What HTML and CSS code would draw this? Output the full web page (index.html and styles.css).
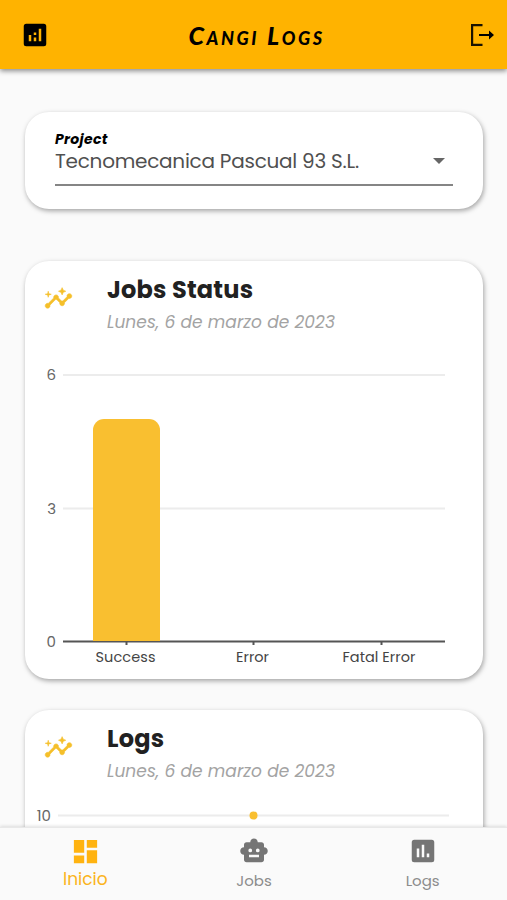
FILE: index.html
```html
<!DOCTYPE html>
<html lang="es">
<head>
    <meta charset="UTF-8">
    <meta name="viewport" content="width=device-width, initial-scale=1.0">
    <title>Cangi Logs</title>
    <link rel="stylesheet" href="styles.css">
</head>
<body>
    <header>
        <svg class="icon" viewBox="0 0 24 24" width="30" height="30"><path fill-rule="evenodd" d="M5 3h14a2 2 0 0 1 2 2v14a2 2 0 0 1-2 2H5a2 2 0 0 1-2-2V5a2 2 0 0 1 2-2zM7 12v5h2v-5zM11 14v3h2v-3zM11 10v2h2v-2zM15 7v10h2V7z"/></svg>
        <h1>Cangi Logs</h1>
        <svg class="icon" viewBox="0 0 26 26" width="26" height="26"><path d="M13.500 3.100H3.100v19.800h10.400" fill="none" stroke="#1a1200" stroke-width="2.200"/><path d="M10 12h10V8.500l5 4.500-5 4.500V14H10z"/></svg>
    </header>
    <main>
        <section class="card project">
            <label>Project</label>
            <div class="select">
                <span>Tecnomecanica Pascual 93 S.L.</span>
                <i class="caret"></i>
            </div>
        </section>
        <section class="card chart-card">
            <div class="card-header">
                <svg class="insights" viewBox="0 0 24 24" width="29" height="29"><path d="M21 8c-1.450 0-2.260 1.440-1.930 2.510l-3.550 3.560c-.3-.09-.74-.09-1.040 0l-2.550-2.550C12.270 10.450 11.460 9 10 9c-1.450 0-2.270 1.440-1.930 2.520l-4.560 4.550C2.440 15.740 1 16.550 1 18c0 1.100.9 2 2 2 1.450 0 2.260-1.440 1.930-2.510l4.550-4.560c.3.090.74.090 1.040 0l2.550 2.550C12.730 16.550 13.540 18 15 18c1.450 0 2.270-1.440 1.930-2.520l3.560-3.550c1.070.33 2.510-.48 2.510-1.930 0-1.100-.9-2-2-2z"/><path d="M15 9l.94-2.070L18 6l-2.060-.93L15 3l-.92 2.070L12 6l2.080.93zM3.500 11L4 9l2-.5L4 8l-.5-2L3 8l-2 .5L3 9z"/></svg>
                <div>
                    <h2>Jobs Status</h2>
                    <p>Lunes, 6 de marzo de 2023</p>
                </div>
            </div>
            <svg class="chart" viewBox="0 0 459 320" width="459" height="320">
                <g class="grid">
                    <path d="M38 15H420M38 148.500H420"/>
                </g>
                <g class="y-labels">
                    <text x="31" y="20">6</text>
                    <text x="31" y="153.500">3</text>
                    <text x="31" y="287">0</text>
                </g>
                <path class="axis" d="M38 281.500H420M101.500 281v4M228.500 281v4M356.500 281v4"/>
                <path class="bar" d="M68 281V70a11 11 0 0 1 11-11h45a11 11 0 0 1 11 11v211z"/>
                <g class="x-labels">
                    <text x="100.500" y="301.500" textLength="60">Success</text>
                    <text x="227.500" y="301.500" textLength="33">Error</text>
                    <text x="354" y="301.500" textLength="73">Fatal Error</text>
                </g>
            </svg>
        </section>
        <section class="card chart-card logs">
            <div class="card-header">
                <svg class="insights" viewBox="0 0 24 24" width="29" height="29"><path d="M21 8c-1.450 0-2.260 1.440-1.930 2.510l-3.550 3.560c-.3-.09-.74-.09-1.040 0l-2.550-2.550C12.270 10.450 11.460 9 10 9c-1.450 0-2.270 1.440-1.930 2.520l-4.560 4.550C2.440 15.740 1 16.550 1 18c0 1.100.9 2 2 2 1.450 0 2.260-1.440 1.930-2.510l4.550-4.560c.3.090.74.090 1.040 0l2.550 2.550C12.730 16.550 13.540 18 15 18c1.450 0 2.270-1.440 1.930-2.520l3.560-3.550c1.070.33 2.510-.48 2.510-1.930 0-1.100-.9-2-2-2z"/><path d="M15 9l.94-2.070L18 6l-2.060-.93L15 3l-.92 2.070L12 6l2.080.93zM3.500 11L4 9l2-.5L4 8l-.5-2L3 8l-2 .5L3 9z"/></svg>
                <div>
                    <h2>Logs</h2>
                    <p>Lunes, 6 de marzo de 2023</p>
                </div>
            </div>
            <svg class="chart" viewBox="0 0 459 320" width="459" height="320">
                <g class="grid"><path d="M33 6.500H424"/></g>
                <g class="y-labels"><text x="26" y="12">10</text></g>
                <circle class="dot" cx="228.500" cy="6.500" r="4"/>
            </svg>
        </section>
    </main>
    <nav>
        <a class="active">
            <svg viewBox="0 0 24 24" width="31" height="31"><path d="M3 13h8V3H3zM3 21h8v-6H3zM13 21h8V11h-8zM13 3v6h8V3z"/></svg>
            <span>Inicio</span>
        </a>
        <a>
            <svg viewBox="0 0 24 24" width="30" height="30"><path fill-rule="evenodd" d="M20 9V7c0-1.100-.9-2-2-2h-3c0-1.660-1.340-3-3-3S9 3.340 9 5H6c-1.100 0-2 .9-2 2v2c-1.660 0-3 1.340-3 3s1.340 3 3 3v4c0 1.100.9 2 2 2h12c1.100 0 2-.9 2-2v-4c1.660 0 3-1.340 3-3s-1.340-3-3-3zM7.500 11.500a1.500 1.500 0 0 1 3 0 1.500 1.500 0 0 1-3 0zM16 17H8v-2h8zM15 13a1.500 1.500 0 0 1 0-3 1.500 1.500 0 0 1 0 3z"/></svg>
            <span>Jobs</span>
        </a>
        <a>
            <svg viewBox="0 0 24 24" width="30" height="30"><path fill-rule="evenodd" d="M5 3h14a2 2 0 0 1 2 2v14a2 2 0 0 1-2 2H5a2 2 0 0 1-2-2V5a2 2 0 0 1 2-2zM7 10v7h2v-7zM11 7v10h2V7zM15 14v3h2v-3z"/></svg>
            <span>Logs</span>
        </a>
    </nav>
</body>
</html>
```
FILE: styles.css
```css
* {
    margin: 0;
    padding: 0;
    box-sizing: border-box;
}
body {
    font-family: Poppins, Inter, sans-serif;
    background-color: #fafafa;
    display: flex;
    flex-direction: column;
    height: 100vh;
    overflow: hidden;
}
header {
    display: flex;
    align-items: center;
    justify-content: space-between;
    height: 69px;
    flex-shrink: 0;
    padding: 0 12px 0 20px;
    background-color: #ffb300;
    box-shadow: 0 2px 5px rgba(0, 0, 0, 0.45);
}
h1 {
    font-family: 'Permanent Marker', Lato, sans-serif;
    font-size: 25px;
    font-weight: 900;
    font-style: italic;
    font-variant: small-caps;
    letter-spacing: 2.6px;
    margin-right: 6px;
}
main {
    flex: 1;
    min-height: 0;
    overflow: hidden;
    padding: 43px 24px 0 25px;
}
.card {
    background-color: #fff;
    border-radius: 24px;
    box-shadow: 1px 2px 5px rgba(0, 0, 0, 0.35);
}
.project {
    height: 97px;
    padding: 18px 30px 0;
    margin-bottom: 52px;
}
.project label {
    display: block;
    font-size: 14px;
    line-height: 19px;
    font-weight: 700;
    font-style: italic;
    letter-spacing: 0.3px;
}
.select {
    display: flex;
    align-items: center;
    justify-content: space-between;
    height: 37px;
    padding: 0 8px 11px 0;
    border-bottom: 2px solid #858585;
    font-size: 20px;
    line-height: 24px;
    letter-spacing: -0.25px;
    color: #505050;
}
.caret {
    border: 6px solid transparent;
    border-top: 6px solid #666;
    border-bottom: 0;
}
.chart-card {
    height: 418px;
    margin-bottom: 31px;
}
.card-header {
    display: flex;
    height: 99px;
    padding: 13px 0 0 19px;
}
.insights {
    fill: #f5bf2a;
    stroke: #f5bf2a;
    stroke-width: 0.5;
    margin: 10px 34px 0 0;
}
h2 {
    font-size: 24px;
    line-height: 32px;
    font-weight: 700;
    letter-spacing: 0.2px;
    color: #212121;
}
.card-header p {
    margin-top: 3px;
    font-size: 17px;
    line-height: 26px;
    letter-spacing: 0.07px;
    font-style: italic;
    color: #a3a3a3;
}
.chart {
    display: block;
}
.grid {
    stroke: #ececec;
    stroke-width: 2;
}
.axis {
    fill: none;
    stroke: #555;
    stroke-width: 2;
}
.bar, .dot {
    fill: #f9bf30;
}
.y-labels {
    font-size: 15px;
    text-anchor: end;
    fill: #666;
}
.x-labels {
    font-size: 14.5px;
    text-anchor: middle;
    fill: #444;
}
nav {
    display: flex;
    height: 73px;
    flex-shrink: 0;
    background-color: #fafafa;
    border-top: 1px solid #e8e8e8;
    box-shadow: 0 -1px 3px rgba(0, 0, 0, 0.12);
    position: relative;
}
nav a {
    flex: 1;
    display: flex;
    flex-direction: column;
    align-items: center;
    padding-top: 8px;
    font-size: 15px;
    color: #8c8c8c;
}
nav svg {
    fill: #757575;
}
nav span {
    line-height: 29px;
}
nav .active {
    padding-left: 1px;
    font-size: 17px;
    color: #fbb41c;
}
nav .active svg {
    fill: #ffb310;
}
nav .active span {
    line-height: 24px;
}
```
